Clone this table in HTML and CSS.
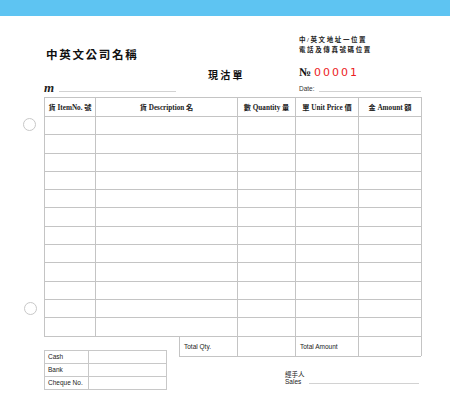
FILE: index.html
```html
<!DOCTYPE html>
<html lang="zh-Hant">
<head>
<meta charset="utf-8">
<title>現沽單</title>
<link rel="stylesheet" href="styles.css">
</head>
<body>
<div class="topbar"></div>
<main class="sheet">
  <span class="hole hole-top"></span>
  <span class="hole hole-bottom"></span>
  <header class="head">
    <h1 class="company">中英文公司名稱</h1>
    <div class="address">
      <p>中/英文地址一位置</p>
      <p>電話及傳真號碼位置</p>
    </div>
    <h2 class="title">現沽單</h2>
    <div class="serial"><span class="no">№</span><span class="num">00001</span></div>
    <div class="to"><span class="m">m</span><span class="fill fill-to"></span></div>
    <div class="date"><span class="date-label">Date:</span><span class="fill"></span></div>
  </header>

  <table class="items">
    <colgroup>
      <col class="c-item"><col class="c-desc"><col class="c-qty"><col class="c-price"><col class="c-amt">
    </colgroup>
    <thead>
      <tr><th>貨 ItemNo. 號</th><th>貨 Description 名</th><th>數 Quantity 量</th><th>單 Unit Price 價</th><th>金 Amount 額</th></tr>
    </thead>
    <tbody>
      <tr><td></td><td></td><td></td><td></td><td></td></tr>
      <tr><td></td><td></td><td></td><td></td><td></td></tr>
      <tr><td></td><td></td><td></td><td></td><td></td></tr>
      <tr><td></td><td></td><td></td><td></td><td></td></tr>
      <tr><td></td><td></td><td></td><td></td><td></td></tr>
      <tr><td></td><td></td><td></td><td></td><td></td></tr>
      <tr><td></td><td></td><td></td><td></td><td></td></tr>
      <tr><td></td><td></td><td></td><td></td><td></td></tr>
      <tr><td></td><td></td><td></td><td></td><td></td></tr>
      <tr><td></td><td></td><td></td><td></td><td></td></tr>
      <tr><td></td><td></td><td></td><td></td><td></td></tr>
      <tr><td></td><td></td><td></td><td></td><td></td></tr>
    </tbody>
  </table>

  <section class="foot">
    <table class="pay">
      <colgroup><col class="p-label"><col></colgroup>
      <tr><td>Cash</td><td></td></tr>
      <tr><td>Bank</td><td></td></tr>
      <tr><td>Cheque No.</td><td></td></tr>
    </table>
    <div class="summary">
      <div class="totals">
        <div class="cell">Total Qty.</div>
        <div class="cell"></div>
        <div class="cell">Total Amount</div>
        <div class="cell"></div>
      </div>
      <div class="sales">
        <div class="sales-label"><span class="zh">經手人</span><span class="en">Sales</span></div>
        <span class="fill"></span>
      </div>
    </div>
  </section>
</main>
</body>
</html>
```

FILE: styles.css
```css
* { box-sizing: border-box; }

html, body {
  margin: 0;
  padding: 0;
  background: #ffffff;
}

body {
  width: 450px;
  height: 398px;
  overflow: hidden;
  font-family: "Liberation Sans", "Noto Sans CJK TC", sans-serif;
  color: #222222;
}

.topbar {
  height: 16px;
  background: #5ec4f2;
}

.sheet {
  position: relative;
  padding: 0 29px 0 44px;
}

.hole {
  position: absolute;
  width: 13px;
  height: 13px;
  border: 1px solid #c8c8c8;
  border-radius: 50%;
  background: #ffffff;
}
.hole-top { left: 23px; top: 102px; }
.hole-bottom { left: 24px; top: 286px; }

/* header */
.head {
  display: grid;
  grid-template-columns: 255px 122px;
  grid-template-rows: 26px 21px 11px;
  padding-top: 19px;
}

.company {
  align-self: end;
  margin: 0;
  padding-left: 2px;
  font-family: "Noto Sans CJK TC", sans-serif;
  font-size: 11.5px;
  line-height: 14px;
  font-weight: 700;
  letter-spacing: 1.7px;
  color: #111111;
}

.address {
  align-self: start;
  font-family: "Liberation Serif", "Noto Sans CJK TC", serif;
  font-size: 6.5px;
  line-height: 9.5px;
  font-weight: 700;
  letter-spacing: 1.6px;
  color: #222222;
}
.address p { margin: 0; white-space: nowrap; }

.title {
  margin: 7px 0 0;
  padding-left: 164px;
  font-family: "Noto Sans CJK TC", serif;
  font-size: 10px;
  line-height: 14px;
  font-weight: 700;
  letter-spacing: 2.2px;
  color: #111111;
}

.serial {
  margin-top: 4px;
  display: flex;
  align-items: baseline;
  gap: 3px;
  line-height: 14px;
}
.no {
  font-family: "Liberation Serif", serif;
  font-weight: 700;
  font-size: 12px;
  color: #111111;
}
.num {
  font-family: "DejaVu Sans", sans-serif;
  font-size: 11px;
  letter-spacing: 2px;
  color: #ec1c24;
}

.to, .date {
  display: flex;
  align-items: flex-end;
}
.m {
  font-family: "Liberation Serif", serif;
  font-style: italic;
  font-weight: 700;
  font-size: 13px;
  line-height: 11px;
}
.fill {
  flex: 1;
  border-bottom: 1px solid #d2d2d2;
  margin-bottom: 1px;
}
.fill-to {
  flex: 0 0 117px;
  margin-left: 5px;
}
.date-label {
  font-size: 6.5px;
  line-height: 9px;
  color: #333333;
  margin-right: 4px;
}

/* items table */
.items {
  margin-top: 4px;
  width: 377px;
  border-collapse: collapse;
  table-layout: fixed;
}
.c-item { width: 51px; }
.c-desc { width: 142px; }
.c-qty { width: 58px; }
.c-price { width: 63px; }
.c-amt { width: 63px; }

.items th, .items td {
  border: 1px solid #c4c4c4;
  padding: 0;
}
.items thead tr { height: 19px; }
.items tbody tr { height: 18.3px; }
.items th {
  font-family: "Liberation Serif", "Noto Sans CJK TC", serif;
  font-size: 7.2px;
  font-weight: 700;
  color: #222222;
  text-align: center;
  white-space: nowrap;
}

/* footer */
.foot {
  display: flex;
  justify-content: space-between;
  align-items: flex-start;
}

.pay {
  margin-top: 13px;
  width: 123px;
  border-collapse: collapse;
  table-layout: fixed;
}
.p-label { width: 44px; }
.pay td {
  height: 13px;
  border: 1px solid #c8c8c8;
  padding: 0 0 0 3px;
  font-size: 6.5px;
  color: #222222;
  white-space: nowrap;
}

.summary {
  width: 242px;
}
.totals {
  display: grid;
  grid-template-columns: 58px 58px 63px 63px;
  height: 20.5px;
  border-left: 1px solid #c4c4c4;
  border-bottom: 1px solid #c4c4c4;
}
.totals .cell {
  display: flex;
  align-items: center;
  padding-left: 4px;
  border-right: 1px solid #c4c4c4;
  font-size: 6.5px;
  color: #222222;
  white-space: nowrap;
}

.sales {
  display: flex;
  align-items: flex-end;
  margin: 14px 2px 0 106px;
}
.sales-label {
  display: flex;
  flex-direction: column;
  align-items: flex-start;
}
.sales-label .zh {
  font-family: "Noto Sans CJK TC", sans-serif;
  font-size: 6.5px;
  line-height: 7px;
  color: #222222;
}
.sales-label .en {
  font-size: 6.5px;
  line-height: 7px;
  color: #222222;
}
.sales .fill {
  margin-left: 4px;
  margin-bottom: 1px;
}
```
